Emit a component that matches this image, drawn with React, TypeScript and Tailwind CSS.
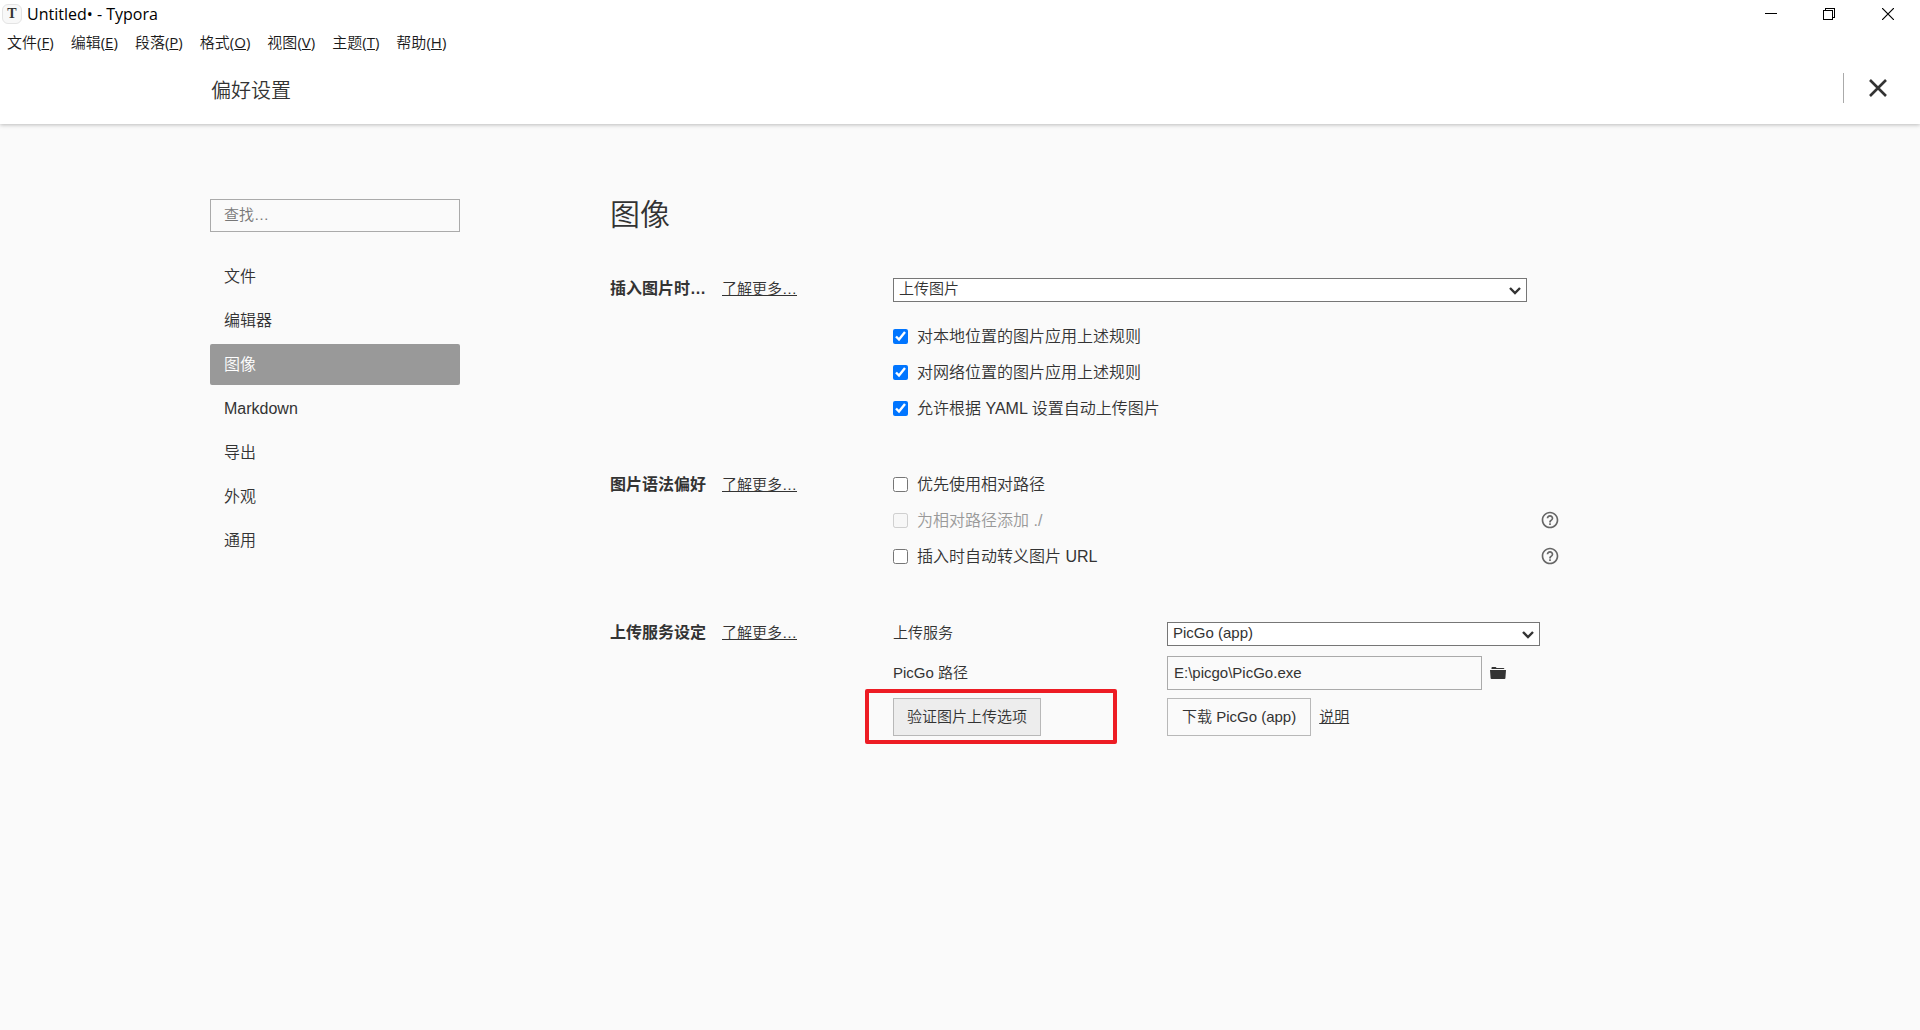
import { useState } from 'react';
import type { ReactNode } from 'react';
import { MdHelpOutline } from 'react-icons/md';

const menus = [
  { label: '文件', hotkey: 'F' },
  { label: '编辑', hotkey: 'E' },
  { label: '段落', hotkey: 'P' },
  { label: '格式', hotkey: 'O' },
  { label: '视图', hotkey: 'V' },
  { label: '主题', hotkey: 'T' },
  { label: '帮助', hotkey: 'H' },
];

const tabs = ['文件', '编辑器', '图像', 'Markdown', '导出', '外观', '通用'];

function TitleBar() {
  return (
    <div className="flex h-7 items-center justify-between text-black">
      <div className="flex items-center gap-[5px] pl-0.5">
        <span className="flex size-5 items-center justify-center rounded-md border border-[#e4e4e4] bg-[#f8f8f8] font-['Liberation_Serif',serif] text-[14px] leading-none font-bold text-[#333]">
          T
        </span>
        <span className="font-['Open_Sans','Noto_Sans_CJK_SC',sans-serif] text-base leading-5 font-normal">
          Untitled• - Typora
        </span>
      </div>
      <div className="flex pr-0.5">
        <button type="button" aria-label="最小化" className="flex h-7 w-[58px] items-center justify-center">
          <svg width="12" height="12" viewBox="0 0 12 12" stroke="currentColor" shapeRendering="crispEdges">
            <path d="M0 5.5h12" />
          </svg>
        </button>
        <button type="button" aria-label="还原" className="flex h-7 w-[58px] items-center justify-center">
          <svg width="12" height="12" viewBox="0 0 12 12" fill="none" stroke="currentColor" shapeRendering="crispEdges">
            <path d="M0.5 2.5h9v9h-9zM2.5 2.5v-2h9v9h-2" />
          </svg>
        </button>
        <button type="button" aria-label="关闭" className="flex h-7 w-[60px] items-center justify-center">
          <svg width="12" height="12" viewBox="0 0 12 12" stroke="currentColor" strokeWidth="1.2">
            <path d="M0 0l12 12M12 0L0 12" />
          </svg>
        </button>
      </div>
    </div>
  );
}

function MenuBar() {
  return (
    <nav className="flex h-7 items-center gap-[17px] pl-[7px] font-['Open_Sans','Noto_Sans_CJK_SC',sans-serif] text-[15px] leading-5 font-normal text-[#1a1a1a]">
      {menus.map((menu) => (
        <button key={menu.hotkey} type="button">
          <span className="font-[350]">{menu.label}</span>(<span className="underline">{menu.hotkey}</span>)
        </button>
      ))}
    </nav>
  );
}

function Section({ title, children }: { title: string; children: ReactNode }) {
  return (
    <section className="grid grid-cols-[283px_1fr]">
      <div className="flex items-start gap-4">
        <h2 className="w-24 text-base leading-[22px] font-bold whitespace-nowrap">{title}</h2>
        <a href="#" className="text-[15px] leading-[22px] underline">
          了解更多…
        </a>
      </div>
      <div>{children}</div>
    </section>
  );
}

interface SelectProps {
  id: string;
  label?: string;
  option: string;
}

function Select({ id, label, option }: SelectProps) {
  return (
    <div className="relative">
      <select
        id={id}
        aria-label={label}
        className="block h-6 w-full appearance-none border border-[#767676] bg-white px-[5px] pb-0.5 text-[15px] leading-5"
      >
        <option>{option}</option>
      </select>
      <svg
        className="pointer-events-none absolute top-[9px] right-1.5"
        width="12"
        height="8"
        viewBox="0 0 12 8"
        fill="none"
        stroke="currentColor"
        strokeWidth="2.4"
      >
        <path d="M1 1l5 5 5-5" />
      </svg>
    </div>
  );
}

interface CheckRowProps {
  label: string;
  defaultChecked?: boolean;
  disabled?: boolean;
  help?: boolean;
}

function CheckRow({ label, defaultChecked, disabled, help }: CheckRowProps) {
  return (
    <div className="flex h-5 items-center justify-between">
      <label className={disabled ? 'flex items-center gap-[9px] text-[#999]' : 'flex items-center gap-[9px]'}>
        <input type="checkbox" defaultChecked={defaultChecked} disabled={disabled} className="size-[15px]" />
        <span className="pt-0.5 text-base leading-5">{label}</span>
      </label>
      {help && (
        <button type="button" aria-label="帮助" className="text-[#666]">
          <MdHelpOutline size={20} />
        </button>
      )}
    </div>
  );
}

export default function App() {
  const [active, setActive] = useState('图像');

  return (
    <div className="flex min-h-screen flex-col bg-[#fafafa] font-['Liberation_Sans','Noto_Sans_CJK_SC',sans-serif] font-[350] text-[#333]">
      <header className="bg-white shadow-[0_1px_4px_rgba(0,0,0,0.25)]">
        <TitleBar />
        <MenuBar />
        <div className="flex items-start justify-between pt-[17px] pb-[18px] pl-[211px]">
          <h1 className="pt-[3px] text-xl leading-[30px]">偏好设置</h1>
          <div className="flex h-[30px] items-center border-l border-[#aaa] pr-[33px] pl-[25px]">
            <button type="button" aria-label="关闭偏好设置">
              <svg width="18" height="18" viewBox="0 0 18 18" stroke="currentColor" strokeWidth="2.6">
                <path d="M1 1l16 16M17 1L1 17" />
              </svg>
            </button>
          </div>
        </div>
      </header>

      <div className="flex gap-[150px] px-[210px] pt-[75px]">
        <aside className="w-[250px] shrink-0">
          <input
            type="text"
            aria-label="查找"
            placeholder="查找…"
            className="block h-[33px] w-full border border-[#aaa] px-[13px] pb-0.5 text-[15px] placeholder:text-[#777]"
          />
          <nav className="mt-6 flex flex-col gap-[3px]">
            {tabs.map((tab) => (
              <button
                key={tab}
                type="button"
                onClick={() => setActive(tab)}
                className={
                  tab === active
                    ? 'h-[41px] rounded-xs bg-[#999] px-3.5 text-left text-base text-white'
                    : 'h-[41px] rounded-xs px-3.5 text-left text-base'
                }
              >
                {tab}
              </button>
            ))}
          </nav>
        </aside>

        <main className="max-w-[950px] flex-1">
          <h1 className="mb-[47px] text-[30px] leading-8">图像</h1>

          <div className="flex flex-col gap-14">
            <Section title="插入图片时…">
              <div className="pr-[33px]">
                <Select id="insert-action" label="插入图片时" option="上传图片" />
              </div>
              <div className="mt-6 flex flex-col gap-4">
                <CheckRow label="对本地位置的图片应用上述规则" defaultChecked />
                <CheckRow label="对网络位置的图片应用上述规则" defaultChecked />
                <CheckRow label="允许根据 YAML 设置自动上传图片" defaultChecked />
              </div>
            </Section>

            <Section title="图片语法偏好">
              <div className="flex flex-col gap-4">
                <CheckRow label="优先使用相对路径" />
                <CheckRow label="为相对路径添加 ./" disabled help />
                <CheckRow label="插入时自动转义图片 URL" help />
              </div>
            </Section>

            <Section title="上传服务设定">
              <div className="grid grid-cols-[274px_1fr] items-center gap-y-2 text-[15px]">
                <label htmlFor="uploader" className="self-start leading-[22px]">
                  上传服务
                </label>
                <div className="pr-5 pb-0.5">
                  <Select id="uploader" option="PicGo (app)" />
                </div>

                <label htmlFor="picgo-path">PicGo 路径</label>
                <div className="flex items-center gap-2 pr-[54px]">
                  <input
                    id="picgo-path"
                    type="text"
                    defaultValue="E:\picgo\PicGo.exe"
                    className="h-[34px] min-w-0 flex-1 border border-[#aaa] px-1.5 pb-0.5"
                  />
                  <button type="button" aria-label="选择文件夹">
                    <svg width="16" height="14" viewBox="0 0 16 14" fill="currentColor">
                      <path d="M1.5 3V1.8c0-.5.3-.8.8-.8h3.2c.4 0 .7.2.8.6l.1.4h7.1c.5 0 .8.3.8.7V3z" />
                      <path d="M0 4h16l-.6 8.2c0 .5-.4.8-.9.8h-13c-.5 0-.9-.3-.9-.8z" />
                    </svg>
                  </button>
                </div>

                <div className="relative">
                  <button type="button" className="h-[38px] border border-[#b8b8b8] bg-[#ededed] px-[13px]">
                    验证图片上传选项
                  </button>
                  <div className="pointer-events-none absolute -top-[9px] right-[50px] -bottom-2 -left-7 rounded-xs border-4 border-[#ed1c24]" />
                </div>
                <div className="flex items-center gap-2">
                  <button type="button" className="h-[38px] border border-[#b8b8b8] px-3.5">
                    下载 PicGo (app)
                  </button>
                  <a href="#" className="underline">
                    说明
                  </a>
                </div>
              </div>
            </Section>
          </div>
        </main>
      </div>
    </div>
  );
}
